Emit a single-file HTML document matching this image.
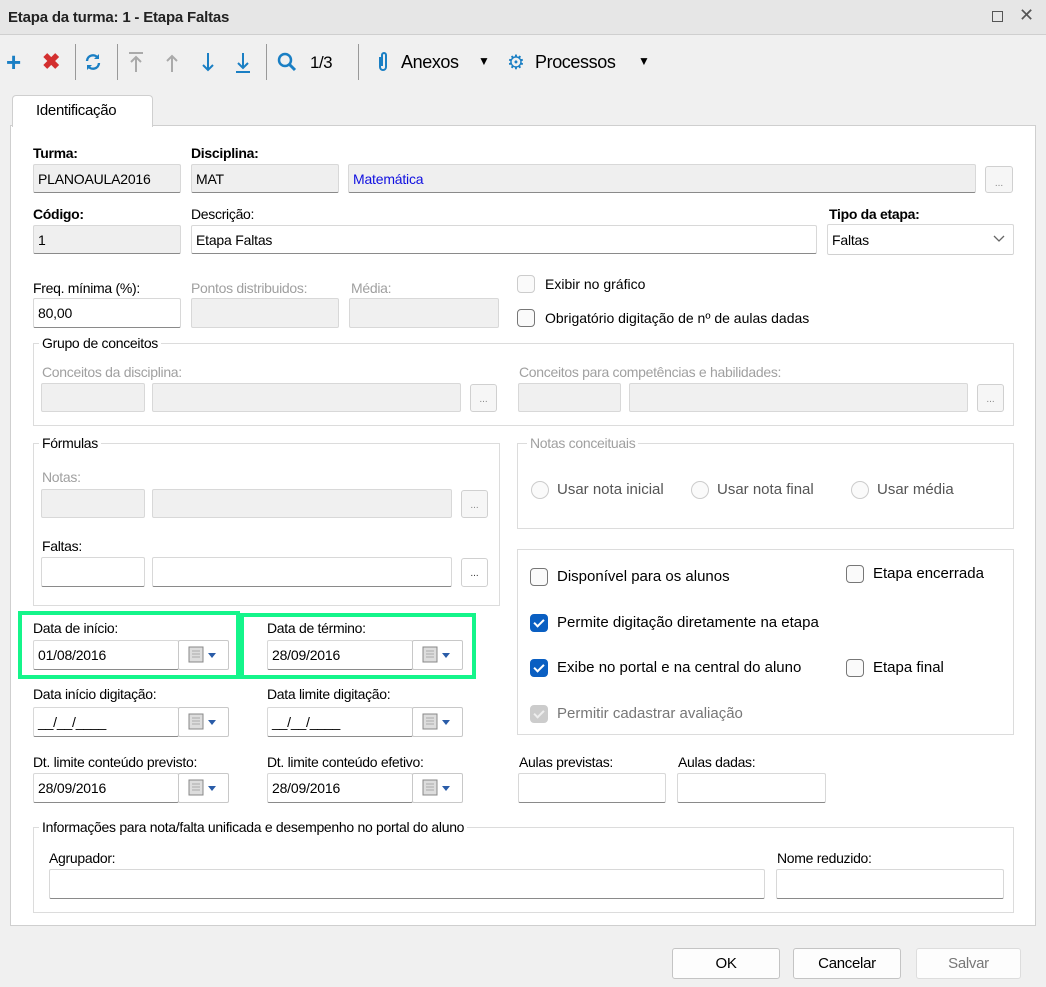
<!DOCTYPE html>
<html><head><meta charset="utf-8"><style>
*{box-sizing:border-box;margin:0;padding:0}
body{width:1046px;height:987px;background:#f0f0f0;font-family:"Liberation Sans",sans-serif;font-size:14px;color:#000;position:relative;overflow:hidden}
.a{position:absolute;white-space:nowrap}
.l{position:absolute;white-space:nowrap;font-size:14px;letter-spacing:-0.3px;line-height:16px}
.g{color:#a0a0a0}
.b{font-weight:bold}
.i{position:absolute;background:#fff;border:1px solid #d8d8d8;border-bottom:1px solid #8a8a8a;border-radius:2px;padding:0 4px;font-size:14px;letter-spacing:-0.2px;display:flex;align-items:center}
.d{background:#efefef}
.dd{background:#f0f0f0;border-bottom-color:#d8d8d8}
.btn{position:absolute;border:1px solid #d0d0d0;border-radius:3px;background:#f6f6f6;color:#888;font-size:10px;text-align:center;line-height:30px}
.fs{position:absolute;border:1px solid #dcdcdc}
.lg{position:absolute;background:#fff;padding:0 3px;font-size:14px;letter-spacing:-0.3px;line-height:16px}
.cb{position:absolute;width:18px;height:18px;border:1px solid #777;border-radius:4px;background:#fafafa}
.cbx{background:#0a5fc2;border-color:#0a5fc2}
.cbx::after{content:"";position:absolute;left:5px;top:2px;width:4px;height:8px;border:solid #fff;border-width:0 2px 2px 0;transform:rotate(45deg)}
.cbd{background:#ccc;border-color:#ccc}
.cbd::after{content:"";position:absolute;left:5px;top:2px;width:4px;height:8px;border:solid #eee;border-width:0 2px 2px 0;transform:rotate(45deg)}
.ct{position:absolute;font-size:15px;line-height:18px;white-space:nowrap}
.rd{position:absolute;width:18px;height:18px;border:1px solid #ccc;border-radius:50%;background:#fafafa}
.cal{position:absolute;width:51px;border:1px solid #c8c8c8;border-radius:2px;background:#fff}
.green{position:absolute;border:4px solid #14f58a}
.sep{position:absolute;top:44px;width:1px;height:36px;background:#999}
.bb{position:absolute;top:948px;height:31px;border:1px solid #c4c4c4;border-radius:3px;background:#fdfdfd;text-align:center;line-height:29px;font-size:15px;letter-spacing:-0.3px}
</style></head><body>
<!-- title -->
<div class="a" style="left:0;top:0;width:1046px;height:35px;background:#e6e6e6;border-bottom:1px solid #cfcfcf"></div>
<div class="a b" style="left:8px;top:9px;font-size:15px;letter-spacing:-0.2px;color:#222">Etapa da turma: 1 - Etapa Faltas</div>
<div class="a" style="left:992px;top:11px;width:11px;height:11px;border:1.5px solid #555"></div>
<div class="a" style="left:1019px;top:5px;font-size:18px;color:#555">✕</div>
<!-- toolbar -->
<div class="a" style="left:6px;top:49px;font-size:26px;font-weight:bold;color:#1a7fc4;line-height:26px">+</div>
<div class="a" style="left:42px;top:50px;font-size:22px;font-weight:bold;color:#d32f2f;line-height:24px">✖</div>
<div class="sep" style="left:75px"></div>
<svg class="a" style="left:83px;top:52px" width="20" height="20" viewBox="0 0 20 20"><path d="M4 9a6 6 0 0 1 11-3M16 11a6 6 0 0 1-11 3" fill="none" stroke="#1a7fc4" stroke-width="2.4"/><path d="M16 2v5h-5zM4 18v-5h5z" fill="#1a7fc4"/></svg>
<div class="sep" style="left:117px"></div>
<svg class="a" style="left:126px;top:50px" width="140" height="24" viewBox="0 0 140 24"><g stroke="#aaa" stroke-width="2" fill="none"><path d="M3 3h14M10 7v15M5 12l5-5 5 5"/><path d="M46 6v16M41 11l5-5 5 5"/></g><g stroke="#1a7fc4" stroke-width="2" fill="none"><path d="M82 3v17M77 15l5 5 5-5"/><path d="M117 3v15M112 13l5 5 5-5M110 22h14"/></g></svg>
<div class="sep" style="left:266px"></div>
<svg class="a" style="left:276px;top:51px" width="22" height="22" viewBox="0 0 22 22"><circle cx="9" cy="9" r="6" fill="none" stroke="#1a7fc4" stroke-width="2.5"/><path d="M13 13l6 6" stroke="#1a7fc4" stroke-width="3"/></svg>
<div class="a" style="left:310px;top:53px;font-size:17px;letter-spacing:-0.5px">1/3</div>
<div class="sep" style="left:358px"></div>
<svg class="a" style="left:376px;top:51px" width="14" height="22" viewBox="0 0 14 22"><path d="M4 6v10a3 3 0 0 0 6 0V4a2 2 0 0 0-4 0v11" fill="none" stroke="#1a7fc4" stroke-width="2"/></svg>
<div class="a" style="left:401px;top:52px;font-size:18px;letter-spacing:-0.4px">Anexos</div>
<div class="a" style="left:478px;top:54px;font-size:12px">▼</div>
<div class="a" style="left:507px;top:50px;font-size:20px;color:#1a7fc4">⚙</div>
<div class="a" style="left:535px;top:52px;font-size:18px;letter-spacing:-0.4px">Processos</div>
<div class="a" style="left:638px;top:54px;font-size:12px">▼</div>
<!-- panel -->
<div class="a" style="left:10px;top:125px;width:1026px;height:801px;background:#fff;border:1px solid #cfcfcf"></div>
<div class="a" style="left:12px;top:95px;width:141px;height:32px;background:#fff;border:1px solid #cfcfcf;border-bottom:none;border-radius:4px 4px 0 0"></div>
<div class="l" style="left:36px;top:103px;font-size:15px">Identificação</div>

<div class="l b" style="left:33px;top:145px">Turma:</div>
<div class="l b" style="left:191px;top:145px">Disciplina:</div>
<div class="i d" style="left:33px;top:164px;width:148px;height:29px">PLANOAULA2016</div>
<div class="i d" style="left:191px;top:164px;width:148px;height:29px">MAT</div>
<div class="i d" style="left:348px;top:164px;width:628px;height:29px;color:#1010e0">Matemática</div>
<div class="btn" style="left:985px;top:166px;width:28px;height:27px;line-height:34px">...</div>

<div class="l b" style="left:33px;top:206px">Código:</div>
<div class="l" style="left:191px;top:206px">Descrição:</div>
<div class="l b" style="left:829px;top:206px">Tipo da etapa:</div>
<div class="i d" style="left:33px;top:225px;width:148px;height:29px">1</div>
<div class="i" style="left:191px;top:225px;width:626px;height:29px">Etapa Faltas</div>
<div class="i" style="left:827px;top:224px;width:187px;height:31px;border-bottom-color:#d0d0d0">Faltas</div>
<svg class="a" style="left:993px;top:235px" width="12" height="8"><path d="M1 1l5 5 5-5" fill="none" stroke="#666" stroke-width="1.3"/></svg>

<div class="l" style="left:33px;top:280px">Freq. mínima (%):</div>
<div class="l g" style="left:191px;top:280px">Pontos distribuidos:</div>
<div class="l g" style="left:351px;top:280px">Média:</div>
<div class="i" style="left:33px;top:298px;width:148px;height:30px">80,00</div>
<div class="i dd" style="left:191px;top:298px;width:148px;height:30px"></div>
<div class="i dd" style="left:349px;top:298px;width:150px;height:30px"></div>
<div class="cb" style="left:517px;top:275px;border-color:#ccc"></div>
<div class="ct" style="left:545px;top:275px;font-size:14px">Exibir no gráfico</div>
<div class="cb" style="left:517px;top:309px"></div>
<div class="ct" style="left:545px;top:309px;font-size:14px">Obrigatório digitação de nº de aulas dadas</div>

<div class="fs" style="left:33px;top:343px;width:981px;height:83px"></div>
<div class="lg" style="left:39px;top:335px">Grupo de conceitos</div>
<div class="l g" style="left:42px;top:364px">Conceitos da disciplina:</div>
<div class="l g" style="left:519px;top:364px">Conceitos para competências e habilidades:</div>
<div class="i dd" style="left:41px;top:383px;width:104px;height:29px"></div>
<div class="i dd" style="left:152px;top:383px;width:309px;height:29px"></div>
<div class="btn" style="left:470px;top:384px;width:27px;height:28px">...</div>
<div class="i dd" style="left:518px;top:383px;width:103px;height:29px"></div>
<div class="i dd" style="left:629px;top:383px;width:339px;height:29px"></div>
<div class="btn" style="left:977px;top:384px;width:27px;height:28px">...</div>

<div class="fs" style="left:33px;top:443px;width:467px;height:163px"></div>
<div class="lg" style="left:39px;top:435px">Fórmulas</div>
<div class="l g" style="left:42px;top:469px">Notas:</div>
<div class="i dd" style="left:41px;top:489px;width:104px;height:29px"></div>
<div class="i dd" style="left:152px;top:489px;width:300px;height:29px"></div>
<div class="btn" style="left:461px;top:490px;width:27px;height:28px">...</div>
<div class="l" style="left:42px;top:538px">Faltas:</div>
<div class="i" style="left:41px;top:557px;width:104px;height:30px"></div>
<div class="i" style="left:152px;top:557px;width:300px;height:30px"></div>
<div class="btn" style="left:461px;top:558px;width:27px;height:29px;color:#333;background:#fff">...</div>

<div class="fs" style="left:517px;top:443px;width:497px;height:86px"></div>
<div class="lg g" style="left:527px;top:435px">Notas conceituais</div>
<div class="rd" style="left:531px;top:481px"></div><div class="ct g" style="left:557px;top:481px;color:#555">Usar nota inicial</div>
<div class="rd" style="left:691px;top:481px"></div><div class="ct" style="left:717px;top:481px;color:#555">Usar nota final</div>
<div class="rd" style="left:851px;top:481px"></div><div class="ct" style="left:877px;top:481px;color:#555">Usar média</div>

<div class="fs" style="left:517px;top:549px;width:497px;height:186px"></div>
<div class="cb" style="left:530px;top:568px"></div><div class="ct" style="left:557px;top:568px">Disponível para os alunos</div>
<div class="cb" style="left:846px;top:565px"></div><div class="ct" style="left:873px;top:565px">Etapa encerrada</div>
<div class="cb cbx" style="left:530px;top:614px"></div><div class="ct" style="left:557px;top:614px">Permite digitação diretamente na etapa</div>
<div class="cb cbx" style="left:530px;top:659px"></div><div class="ct" style="left:557px;top:659px">Exibe no portal e na central do aluno</div>
<div class="cb" style="left:846px;top:659px"></div><div class="ct" style="left:873px;top:659px">Etapa final</div>
<div class="cb cbd" style="left:530px;top:705px"></div><div class="ct" style="left:557px;top:705px;color:#777">Permitir cadastrar avaliação</div>

<!-- dates -->
<div class="l" style="left:33px;top:620px">Data de início:</div>
<div class="l" style="left:267px;top:620px">Data de término:</div>
<div class="i" style="left:33px;top:640px;width:146px;height:30px">01/08/2016</div>
<div class="i" style="left:267px;top:640px;width:146px;height:30px">28/09/2016</div>
<div class="l" style="left:33px;top:686px">Data início digitação:</div>
<div class="l" style="left:267px;top:686px">Data limite digitação:</div>
<div class="i" style="left:33px;top:707px;width:146px;height:30px">__/__/____</div>
<div class="i" style="left:267px;top:707px;width:146px;height:30px">__/__/____</div>
<div class="l" style="left:33px;top:754px">Dt. limite conteúdo previsto:</div>
<div class="l" style="left:267px;top:754px">Dt. limite conteúdo efetivo:</div>
<div class="i" style="left:33px;top:773px;width:146px;height:30px">28/09/2016</div>
<div class="i" style="left:267px;top:773px;width:146px;height:30px">28/09/2016</div>
<div class="cal" style="left:178px;top:640px;height:30px"></div>
<div class="cal" style="left:412px;top:640px;height:30px"></div>
<div class="cal" style="left:178px;top:707px;height:30px"></div>
<div class="cal" style="left:412px;top:707px;height:30px"></div>
<div class="cal" style="left:178px;top:773px;height:30px"></div>
<div class="cal" style="left:412px;top:773px;height:30px"></div>
<svg class="a" style="left:188px;top:646px" width="34" height="150" viewBox="0 0 34 150"><defs><g id="c"><rect x="1" y="1" width="14" height="15" fill="#ddd" stroke="#888"/><path d="M4 5h8M4 8h8M4 11h8" stroke="#aaa"/><path d="M20 7h8l-4 5z" fill="#2a5ca8"/></g></defs><use href="#c"/><use href="#c" y="67"/><use href="#c" y="133"/></svg>
<svg class="a" style="left:422px;top:646px" width="34" height="150" viewBox="0 0 34 150"><use href="#c"/><use href="#c" y="67"/><use href="#c" y="133"/></svg>
<div class="green" style="left:18px;top:611px;width:222px;height:68px"></div>
<div class="green" style="left:240px;top:613px;width:236px;height:66px"></div>

<div class="l" style="left:519px;top:754px">Aulas previstas:</div>
<div class="l" style="left:678px;top:754px">Aulas dadas:</div>
<div class="i" style="left:518px;top:773px;width:148px;height:30px"></div>
<div class="i" style="left:677px;top:773px;width:149px;height:30px"></div>

<div class="fs" style="left:33px;top:827px;width:981px;height:86px"></div>
<div class="lg" style="left:39px;top:819px">Informações para nota/falta unificada e desempenho no portal do aluno</div>
<div class="l" style="left:49px;top:850px">Agrupador:</div>
<div class="l" style="left:777px;top:850px">Nome reduzido:</div>
<div class="i" style="left:49px;top:869px;width:716px;height:30px"></div>
<div class="i" style="left:776px;top:869px;width:228px;height:30px"></div>

<div class="bb" style="left:672px;width:108px">OK</div>
<div class="bb" style="left:793px;width:108px">Cancelar</div>
<div class="bb" style="left:916px;width:105px;color:#777;border-color:#ddd">Salvar</div>
</body></html>
